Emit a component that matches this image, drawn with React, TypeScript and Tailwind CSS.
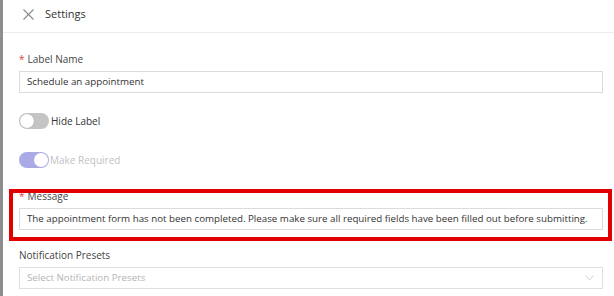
import React from "react";

function Toggle({ on, disabled }: { on: boolean; disabled?: boolean }) {
  return (
    <div
      className={
        "flex h-[16px] w-[30px] items-center rounded-full p-[1px] " +
        (on ? "justify-end bg-[#a9aae6]" : "justify-start bg-[#c4c4c4]")
      }
    >
      <div
        className={
          "h-[14px] w-[14px] rounded-full bg-white " + (disabled ? "" : "shadow-[0_0_1px_rgba(0,0,0,0.3)]")
        }
      />
    </div>
  );
}

function FieldLabel({ text, required }: { text: string; required?: boolean }) {
  return (
    <div className="mb-[4px] flex h-[16px] items-center text-[10px] leading-[16px] text-[#444]">
      {required && <span className="mr-[3px] text-[#e2453c]">*</span>}
      {text}
    </div>
  );
}

export default function App(): JSX.Element {
  return (
    <div
      className="relative flex h-[296px] w-[614px] overflow-hidden bg-white"
      style={{ fontFamily: '"Open Sans", "Noto Sans", sans-serif' }}
    >
      <div className="w-[3px] shrink-0 bg-[#8d8d8d]" />
      <div className="flex flex-1 flex-col">
        <div className="flex h-[33px] items-center border-b border-[#ececec] pb-[4px] pl-[19px]">
          <svg width="11" height="11" viewBox="0 0 11 11" className="ml-[1px]">
            <path d="M0.5 0.5 L10.5 10.5 M10.5 0.5 L0.5 10.5" stroke="#8a8a8a" strokeWidth="1.1" fill="none" />
          </svg>
          <span className="ml-[11px] text-[11px] text-[#333]">Settings</span>
        </div>

        <div className="flex flex-col pl-[16px] pr-[11px]">
          <div className="mt-[18px]">
            <FieldLabel text="Label Name" required />
            <div className="flex h-[22px] items-center border border-[#dcdcdc] px-[7px] text-[9.75px] text-[#333]">
              Schedule an appointment
            </div>
          </div>

          <div className="mt-[20px] flex items-center">
            <Toggle on={false} />
            <span className="ml-[2px] text-[10px] text-[#333]">Hide Label</span>
          </div>

          <div className="mt-[23px] flex items-center">
            <Toggle on disabled />
            <span className="ml-[1px] text-[10px] text-[#c2c2c2]">Make Required</span>
          </div>

          <div className="mt-[20px]">
            <FieldLabel text="Message" required />
            <div className="flex h-[22px] items-center overflow-hidden whitespace-nowrap border border-[#dcdcdc] px-[7px] text-[9.75px] text-[#333]">
              The appointment form has not been completed. Please make sure all required fields have been filled out before submitting.
            </div>
          </div>

          <div className="mt-[17px]">
            <FieldLabel text="Notification Presets" />
            <div className="flex h-[22px] items-center justify-between border border-[#e0e0e0] px-[7px] text-[9.75px] text-[#b5b5b5]">
              <span>Select Notification Presets</span>
              <svg width="9" height="6" viewBox="0 0 9 6" className="mr-[1px]">
                <path d="M0.5 0.5 L4.5 5 L8.5 0.5" stroke="#c8c8c8" strokeWidth="0.9" fill="none" />
              </svg>
            </div>
          </div>
        </div>
      </div>

      <div className="pointer-events-none absolute left-[9px] top-[189px] h-[52px] w-[603px] border-[4px] border-[#e00000]" />
    </div>
  );
}
